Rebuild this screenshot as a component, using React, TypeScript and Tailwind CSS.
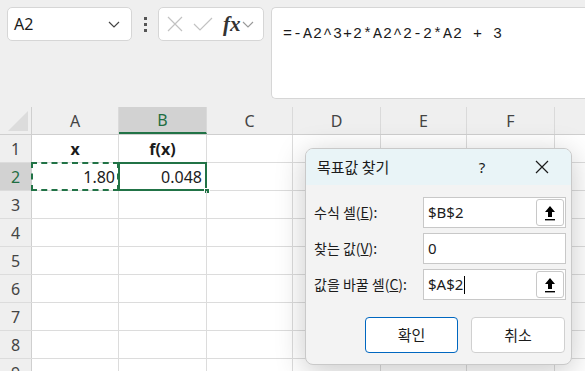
import React from "react";

const UI = '"Segoe UI", "Noto Sans", "Noto Sans CJK KR", sans-serif';
const KR = '"Noto Sans CJK KR", "Noto Sans", sans-serif';

const cols = [
  { w: 87, l: "A" },
  { w: 88, l: "B" },
  { w: 86, l: "C" },
  { w: 88, l: "D" },
  { w: 86, l: "E" },
  { w: 88, l: "F" },
  { w: 120, l: "" },
];

function UpBtn() {
  return (
    <div className="w-[28px] h-[27px] bg-white border border-[#c8c8c8] rounded-[3px] flex items-center justify-center">
      <svg width="12" height="16" viewBox="0 0 12 16">
        <path d="M6 1 L11 7 L8 7 L8 12 L4 12 L4 7 L1 7 Z" fill="#000" />
        <rect x="1" y="14" width="10" height="1.4" fill="#000" />
      </svg>
    </div>
  );
}

function Field({ label, u, rest, value, btn, cursor }: { label: string; u: string; rest: string; value: string; btn?: boolean; cursor?: boolean }) {
  return (
    <div className="flex items-center h-[31px]">
      <div className="w-[117px] pl-[8px] text-[14px] text-[#1b1b1b]" style={{ fontFamily: KR }}>
        {label}(<span className="underline">{u}</span>){rest}
      </div>
      <div className="flex-1 h-full bg-white border border-[#c8c8c8] flex items-center justify-between pl-[4px] pr-[1px]">
        <span className="text-[15px] text-[#1b1b1b] flex items-center" style={{ fontFamily: UI }}>
          {value}
          {cursor && <span className="inline-block w-[1px] h-[18px] bg-black ml-[1px]" />}
        </span>
        {btn && <UpBtn />}
      </div>
    </div>
  );
}

export default function App() {
  const rowNums = [1, 2, 3, 4, 5, 6, 7, 8, 9];
  return (
    <div className="w-[585px] h-[371px] bg-[#efefef] overflow-hidden relative" style={{ fontFamily: UI }}>
      {/* top formula area */}
      <div className="h-[107px] flex items-start pt-[7px] pl-[7px]">
        <div className="w-[125px] h-[34px] bg-white border border-[#d6d6d6] rounded-[5px] flex items-center justify-between pl-[6px] pr-[10px]">
          <span className="text-[16px] text-[#1b1b1b]">A2</span>
          <svg width="14" height="10" viewBox="0 0 14 10">
            <path d="M2 3 L7 8 L12 3" stroke="#444" strokeWidth="1.2" fill="none" />
          </svg>
        </div>
        <div className="w-[26px] h-[34px] flex flex-col items-center justify-center gap-[3px]">
          <div className="w-[3px] h-[3px] bg-[#555]" />
          <div className="w-[3px] h-[3px] bg-[#555]" />
          <div className="w-[3px] h-[3px] bg-[#555]" />
        </div>
        <div className="w-[106px] h-[34px] bg-white border border-[#d6d6d6] rounded-[5px] flex items-center pl-[8px] gap-[10px]">
          <svg width="16" height="16" viewBox="0 0 16 16">
            <path d="M1 1 L15 15 M15 1 L1 15" stroke="#c2c2c2" strokeWidth="1.2" />
          </svg>
          <svg width="20" height="16" viewBox="0 0 20 16">
            <path d="M1 8 L7 14 L19 2" stroke="#c2c2c2" strokeWidth="1.2" fill="none" />
          </svg>
          <div className="flex items-center gap-[1px]">
            <span className="text-[21px] italic font-bold text-[#333] leading-none" style={{ fontFamily: '"Liberation Serif", serif' }}>
              fx
            </span>
            <svg width="12" height="8" viewBox="0 0 12 8">
              <path d="M1 2 L6 7 L11 2" stroke="#999" strokeWidth="1.1" fill="none" />
            </svg>
          </div>
        </div>
        <div className="flex-1 ml-[7px] h-[92px] bg-white border-y border-l border-[#d6d6d6] rounded-l-[5px] pl-[11px] pt-[12px]">
          <span className="text-[15px] text-[#1b1b1b] tracking-[1px]" style={{ fontFamily: '"Liberation Mono", monospace' }}>
            =-A2^3+2*A2^2-2*A2 + 3
          </span>
        </div>
      </div>

      {/* grid */}
      <div className="bg-white">
        {/* header row */}
        <div className="flex h-[28px] bg-[#efefef] border-b border-[#cfcfcf]">
          <div className="w-[32px] shrink-0 border-r border-[#cfcfcf] relative">
            <svg className="absolute right-[3px] bottom-[3px]" width="20" height="20" viewBox="0 0 20 20">
              <path d="M20 0 L20 20 L0 20 Z" fill="#dcdcdc" />
            </svg>
          </div>
          {cols.map((c) => (
            <div
              key={c.l}
              className={`shrink-0 flex items-center justify-center text-[16px] border-r border-[#dadada] ${
                c.l === "B" ? "bg-[#d2d2d2] text-[#1e6e42] border-b-2 border-b-[#217346]" : "text-[#444]"
              }`}
              style={{ width: c.w }}
            >
              {c.l}
            </div>
          ))}
        </div>
        {rowNums.map((r) => (
          <div key={r} className="flex h-[28px] border-b border-[#dcdcdc]">
            <div
              className={`w-[32px] shrink-0 flex items-center justify-center text-[16px] border-r border-[#cfcfcf] ${
                r === 2 ? "bg-[#d2d2d2] text-[#1e6e42]" : "bg-[#efefef] text-[#444]"
              }`}
            >
              {r}
            </div>
            {cols.map((c, i) => (
              <div
                key={c.l + r}
                className="shrink-0 border-r border-[#dcdcdc] relative flex items-center text-[16px] text-[#1b1b1b]"
                style={{ width: c.w }}
              >
                {r === 1 && i === 0 && <span className="w-full text-center font-bold">x</span>}
                {r === 1 && i === 1 && <span className="w-full text-center font-bold">f(x)</span>}
                {r === 2 && i === 0 && (
                  <>
                    <span className="w-full text-right pr-[3px]">1.80</span>
                    <div className="absolute -left-[1px] -top-[1px] -right-[1px] -bottom-[1px] border-2 border-dashed border-[#217346]" />
                  </>
                )}
                {r === 2 && i === 1 && (
                  <>
                    <span className="w-full text-right pr-[4px]">0.048</span>
                    <div className="absolute -left-[1px] -top-[1px] -right-[1px] -bottom-[1px] border-2 border-[#217346]" />
                    <div className="absolute -right-[4px] -bottom-[4px] w-[6px] h-[6px] bg-[#217346] border border-white" />
                  </>
                )}
              </div>
            ))}
          </div>
        ))}
      </div>

      {/* dialog */}
      <div className="absolute left-[305px] top-[148px] w-[267px] h-[217px] rounded-[8px] border border-[#c9c9c9] bg-[#f3f3f3] shadow-[0_6px_30px_rgba(0,0,0,0.22)] overflow-hidden flex flex-col">
        <div className="h-[36px] bg-[#e9f4f7] flex items-center pl-[11px]" style={{ fontFamily: KR }}>
          <span className="text-[15px] text-[#1b1b1b] flex-1">목표값 찾기</span>
          <span className="w-[62px] text-center text-[15px] text-[#1b1b1b]" style={{ fontFamily: UI }}>?</span>
          <div className="w-[58px] flex items-center justify-center">
            <svg width="14" height="14" viewBox="0 0 14 14">
              <path d="M1 1 L13 13 M13 1 L1 13" stroke="#1b1b1b" strokeWidth="1.2" />
            </svg>
          </div>
        </div>
        <div className="flex flex-col gap-[5px] pt-[12px] pr-[5px]">
          <Field label="수식 셀" u="E" rest=":" value="$B$2" btn />
          <Field label="찾는 값" u="V" rest=":" value="0" />
          <Field label="값을 바꿀 셀" u="C" rest=":" value="$A$2" btn cursor />
        </div>
        <div className="flex justify-end gap-[13px] pr-[6px] pt-[17px]">
          <button className="w-[93px] h-[36px] bg-white border border-[#0067c0] rounded-[4px] text-[15px] text-[#1b1b1b]" style={{ fontFamily: KR }}>
            확인
          </button>
          <button className="w-[94px] h-[36px] bg-white border border-[#d0d0d0] rounded-[4px] text-[15px] text-[#1b1b1b]" style={{ fontFamily: KR }}>
            취소
          </button>
        </div>
      </div>
    </div>
  );
}
